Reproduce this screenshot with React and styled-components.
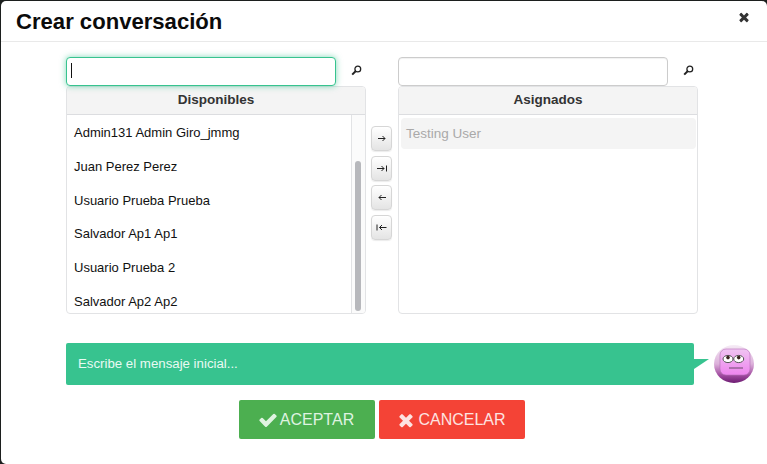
import React from "react";
import styled, { createGlobalStyle } from "styled-components";

const Global = createGlobalStyle`
  html, body { margin: 0; padding: 0; background: #1c1f1e; }
  body { width: 767px; height: 464px; overflow: hidden; font-family: "Liberation Sans", Arial, sans-serif; }
`;
const Modal = styled.div`
  box-sizing: border-box; width: 766px; height: 463px; margin: 1px 0 0 1px;
  background: #fff; border-radius: 5px 5px 0 5px; overflow: hidden;
`;
const Header = styled.header`
  box-sizing: border-box; height: 41px; padding: 0 15px; display: flex; align-items: center;
  justify-content: space-between; border-bottom: 1px solid #e9e9e9;
`;
const Title = styled.h3`
  margin: 0; font-size: 22.1px; line-height: 41px; font-weight: 700; color: #0b0b0b;
`;
const Close = styled.span`
  display: flex; margin: 0 1px 8px 0; color: #333;
`;
const Body = styled.div`
  padding: 15px 0 0 65px;
`;
const Dual = styled.div`
  display: flex; align-items: flex-start;
`;
const Box = styled.section`
  width: 300px; flex: none;
`;
const SearchRow = styled.div`
  display: flex; align-items: center; height: 29px;
`;
const SearchInput = styled.div`
  box-sizing: border-box; width: 270px; height: 29px; background: #fff; border-radius: 4px;
  border: 1px solid ${p => (p.$focus ? "#37c38f" : "#cccccc")};
  box-shadow: ${p => (p.$focus ? "0 0 6px rgba(55,195,143,.65)" : "inset 0 1px 1px rgba(0,0,0,.06)")};
  padding: 5px 0 0 4px;
`;
const Caret = styled.span`
  display: block; width: 1px; height: 15px; background: #111;
`;
const SearchBtn = styled.span`
  display: flex; padding-left: 15px; color: #222; margin-top: -2px;
`;
const Panel = styled.div`
  box-sizing: border-box; height: 228px; border: 1px solid #e2e3e5; border-radius: 4px; overflow: hidden;
`;
const PanelHead = styled.div`
  box-sizing: border-box; height: 28px; background: #f4f4f4; border-bottom: 1px solid #dcdde0;
  text-align: center; font-weight: 700; font-size: 13.5px; line-height: 26px; color: #333;
`;
const PanelBody = styled.div`
  display: flex; height: 199px;
`;
const List = styled.div`
  flex: 1; min-width: 0; height: 199px; overflow: hidden; padding: 1px 0 0 7px; box-sizing: border-box;
`;
const Item = styled.div`
  height: 33.8px; line-height: 33.8px; font-size: 13px; color: #111; white-space: nowrap;
`;
const Track = styled.div`
  box-sizing: border-box; flex: none; width: 14px; border-left: 1px solid #e2e3e5; background: #fbfbfb; padding: 46px 3px 0 3px;
`;
const Thumb = styled.div`
  width: 6px; height: 150px; background: #b7b8bc; border-radius: 3px;
`;
const Selected = styled.div`
  height: 31px; margin: 3px 1px 0 2px; padding-left: 5px; background: #f4f4f4; border-radius: 4px;
  font-size: 13.5px; line-height: 31px; color: #aaa9a9;
`;
const Arrows = styled.div`
  box-sizing: border-box; width: 32px; flex: none; display: flex; flex-direction: column; gap: 4.5px;
  padding: 69px 0 0 5px;
`;
const ArrowBtn = styled.button`
  box-sizing: border-box; width: 21px; height: 25px; padding: 0; display: flex; align-items: center; justify-content: center;
  border: 1px solid #d6d6d6; border-radius: 4px; color: #222;
  background: linear-gradient(#ffffff, #e4e4e4);
  box-shadow: 0 1px 1px rgba(0,0,0,.08);
`;
const MessageRow = styled.div`
  display: flex; align-items: center; margin-top: 29px; height: 42px;
`;
const Message = styled.div`
  box-sizing: border-box; width: 628px; height: 42px; background: #37c38f; border-radius: 2px;
  padding-left: 12px; font-size: 13.25px; line-height: 41px; color: #e9faf3;
`;
const Tail = styled.svg`
  width: 15px; height: 11px; flex: none; margin-right: 5px;
`;
const AvatarSvg = styled.svg`
  width: 40px; height: 38px; flex: none; margin-top: -1px;
`;
const Actions = styled.div`
  display: flex; gap: 4px; margin: 15px 0 0 173px;
`;
const Action = styled.button`
  box-sizing: border-box; width: ${p => p.$w}px; height: 39px; border: 0; border-radius: 2px;
  display: flex; align-items: center; justify-content: center; gap: 2px;
  background: ${p => p.$bg}; color: ${p => p.$fg}; font-family: inherit; font-size: 16px; padding: 0;
  svg { margin-left: -2px; }
`;

const CHECK = "M1671 566q0 40-28 68l-724 724-136 136q-28 28-68 28t-68-28l-136-136-362-362q-28-28-28-68t28-68l136-136q28-28 68-28t68 28l294 295 656-657q28-28 68-28t68 28l136 136q28 28 28 68z";
const TIMES = "M1490 1322q0 40-28 68l-136 136q-28 28-68 28t-68-28l-294-294-294 294q-28 28-68 28t-68-28l-136-136q-28-28-28-68t28-68l294-294-294-294q-28-28-28-68t28-68l136-136q28-28 68-28t68 28l294 294 294-294q28-28 68-28t68 28l136 136q28 28 28 68t-28 68l-294 294 294 294q28 28 28 68z";
const Glyph = ({ d, size }) => (
  <svg width={size} height={size} viewBox="0 0 1792 1792" fill="currentColor"><path d={d} /></svg>
);
const Search = () => (
  <svg width="11" height="11" viewBox="0 0 11 11" fill="none" stroke="currentColor">
    <circle cx="6.8" cy="4" r="2.9" strokeWidth="1.3" />
    <path d="M4.6 6.2 1.2 9.6" strokeWidth="2" />
  </svg>
);
const Arrow = ({ kind }) => {
  const d = {
    right: "M2 5.5h7M6.5 3 9 5.5 6.5 8",
    rightAll: "M1 5.5h7M5.5 3 8 5.5 5.5 8M10.5 2.5v6",
    left: "M3 5.5h7M5.5 3 3 5.5 5.5 8",
    leftAll: "M3.5 5.5h7M6 3 3.5 5.5 6 8M1 2.5v6",
  }[kind];
  return (
    <svg width="11" height="11" viewBox="0 0 11 11" fill="none" stroke="currentColor" strokeWidth="1">
      <path d={d} />
    </svg>
  );
};
const Avatar = () => (
  <AvatarSvg viewBox="0 0 40 38">
    <defs>
      <linearGradient id="av-ball" x1="0" y1="0" x2="0" y2="1">
        <stop offset="0" stopColor="#f6ecf6" />
        <stop offset="0.5" stopColor="#dcb0da" />
        <stop offset="0.8" stopColor="#a04a9f" />
        <stop offset="1" stopColor="#6d1c72" />
      </linearGradient>
      <linearGradient id="av-face" x1="0" y1="0" x2="0" y2="1">
        <stop offset="0" stopColor="#f0c4f2" />
        <stop offset="1" stopColor="#ee84ee" />
      </linearGradient>
    </defs>
    <ellipse cx="20" cy="19" rx="20" ry="19" fill="url(#av-ball)" />
    <rect x="6" y="4" width="30" height="26" rx="6" fill="url(#av-face)" stroke="#b56fb8" strokeWidth="0.6" />
    <ellipse cx="14" cy="14" rx="5" ry="3.6" fill="#fff" stroke="#555" strokeWidth="1" />
    <ellipse cx="24.7" cy="14" rx="5" ry="3.6" fill="#fff" stroke="#555" strokeWidth="1" />
    <circle cx="14" cy="12.6" r="1.8" fill="#3a2320" />
    <circle cx="24.7" cy="12.6" r="1.8" fill="#3a2320" />
    <path d="M15 23h14" stroke="#6b4a6b" strokeWidth="1" />
  </AvatarSvg>
);

const people = ["Admin131 Admin Giro_jmmg", "Juan Perez Perez", "Usuario Prueba Prueba", "Salvador Ap1 Ap1", "Usuario Prueba 2", "Salvador Ap2 Ap2"];

export default function App() {
  return (
    <>
      <Global />
      <Modal>
        <Header>
          <Title>Crear conversación</Title>
          <Close><Glyph d={TIMES} size={14} /></Close>
        </Header>
        <Body>
          <Dual>
            <Box>
              <SearchRow>
                <SearchInput $focus><Caret /></SearchInput>
                <SearchBtn><Search /></SearchBtn>
              </SearchRow>
              <Panel>
                <PanelHead>Disponibles</PanelHead>
                <PanelBody>
                  <List>{people.map(n => <Item key={n}>{n}</Item>)}</List>
                  <Track><Thumb /></Track>
                </PanelBody>
              </Panel>
            </Box>
            <Arrows>
              <ArrowBtn><Arrow kind="right" /></ArrowBtn>
              <ArrowBtn><Arrow kind="rightAll" /></ArrowBtn>
              <ArrowBtn><Arrow kind="left" /></ArrowBtn>
              <ArrowBtn><Arrow kind="leftAll" /></ArrowBtn>
            </Arrows>
            <Box>
              <SearchRow>
                <SearchInput />
                <SearchBtn><Search /></SearchBtn>
              </SearchRow>
              <Panel>
                <PanelHead>Asignados</PanelHead>
                <Selected>Testing User</Selected>
              </Panel>
            </Box>
          </Dual>
          <MessageRow>
            <Message>Escribe el mensaje inicial...</Message>
            <Tail viewBox="0 0 15 11"><path d="M0 0H15L0 10z" fill="#37c38f" /></Tail>
            <Avatar />
          </MessageRow>
          <Actions>
            <Action $w={136} $bg="#4caf50" $fg="#dff3e0"><Glyph d={CHECK} size={20} />ACEPTAR</Action>
            <Action $w={146} $bg="#f44336" $fg="#fde3e1"><Glyph d={TIMES} size={20} />CANCELAR</Action>
          </Actions>
        </Body>
      </Modal>
    </>
  );
}
